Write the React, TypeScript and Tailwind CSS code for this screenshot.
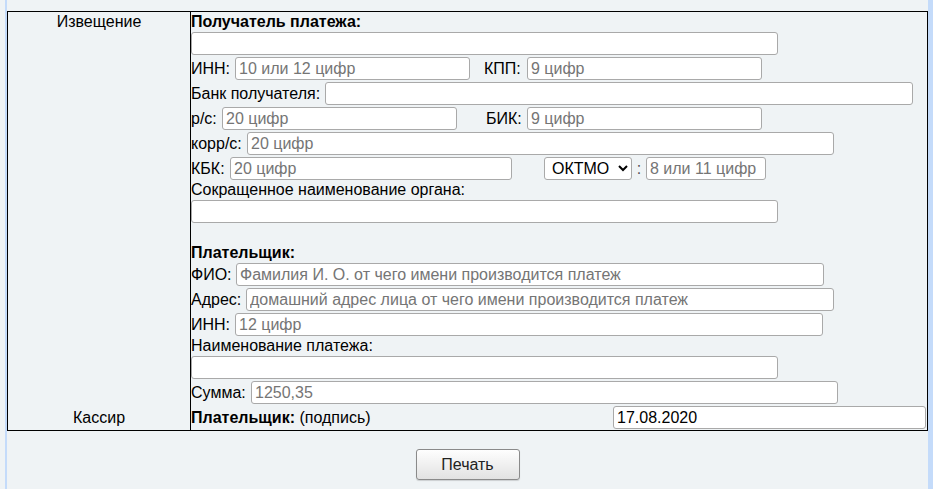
import type { ReactNode } from 'react'

const inputCls =
  'h-[23px] shrink-0 rounded-[3px] border border-[#a9a9a9] bg-white px-[3px] text-[16px] font-normal text-black outline-none placeholder:text-[#757575]'

function Row({ children }: { children: ReactNode }) {
  return <div className="flex h-[25px] items-center whitespace-nowrap">{children}</div>
}

// label width includes the trailing space before the field
function Label({ className, children }: { className: string; children: ReactNode }) {
  return <span className={`shrink-0 font-normal ${className}`}>{children}</span>
}

export default function App() {
  return (
    <div
      className="flex h-[489px] w-full bg-[#eff3f5] text-[16px] text-black"
      style={{ fontFamily: '"Liberation Sans", Arial, sans-serif' }}
    >
      <div className="w-[5px] shrink-0" />
      <div className="w-[923px] shrink-0 border-l-2 border-[#c4dbfa]">
        <div className="mt-[11px] grid grid-cols-[183px_1fr] border border-black">
          <div className="flex flex-col justify-between border-r border-black text-center">
            <div className="h-[19px] leading-[19px]">Извещение</div>
            <div className="h-[25px] leading-[25px]">Кассир</div>
          </div>
          <div className="flex flex-col">
            <div className="h-[19px] font-bold leading-[19px]">Получатель платежа:</div>
            <Row>
              <input className={`${inputCls} w-[587px]`} />
            </Row>
            <Row>
              <Label className="w-[44px]">ИНН:</Label>
              <input className={`${inputCls} w-[235px]`} placeholder="10 или 12 цифр" />
              <Label className="ml-[14px] w-[43px]">КПП:</Label>
              <input className={`${inputCls} w-[235px]`} placeholder="9 цифр" />
            </Row>
            <Row>
              <Label className="w-[134px]">Банк получателя:</Label>
              <input className={`${inputCls} w-[588px]`} />
            </Row>
            <Row>
              <Label className="w-[31px]">р/с:</Label>
              <input className={`${inputCls} w-[235px]`} placeholder="20 цифр" />
              <Label className="ml-[29px] w-[41px]">БИК:</Label>
              <input className={`${inputCls} w-[235px]`} placeholder="9 цифр" />
            </Row>
            <Row>
              <Label className="w-[56px]">корр/с:</Label>
              <input className={`${inputCls} w-[587px]`} placeholder="20 цифр" />
            </Row>
            <Row>
              <Label className="w-[39px]">КБК:</Label>
              <input className={`${inputCls} w-[282px]`} placeholder="20 цифр" />
              <select
                className="ml-[32px] h-[23px] w-[88px] shrink-0 rounded-[3px] border border-[#a9a9a9] bg-white pl-[3px] text-[16px] text-black"
                defaultValue="oktmo"
              >
                <option value="oktmo">ОКТМО</option>
                <option value="okato">ОКАТО</option>
              </select>
              <span className="w-[14px] shrink-0 text-center text-[#555]">:</span>
              <input className={`${inputCls} w-[120px]`} placeholder="8 или 11 цифр" />
            </Row>
            <div className="h-[18px] leading-[18px]">Сокращенное наименование органа:</div>
            <Row>
              <input className={`${inputCls} w-[587px]`} />
            </Row>
            <div className="h-[19px]" />
            <div className="h-[19px] font-bold leading-[19px]">Плательщик:</div>
            <Row>
              <Label className="w-[45px]">ФИО:</Label>
              <input
                className={`${inputCls} w-[588px]`}
                placeholder="Фамилия И. О. от чего имени производится платеж"
              />
            </Row>
            <Row>
              <Label className="w-[55px]">Адрес:</Label>
              <input
                className={`${inputCls} w-[588px]`}
                placeholder="домашний адрес лица от чего имени производится платеж"
              />
            </Row>
            <Row>
              <Label className="w-[44px]">ИНН:</Label>
              <input className={`${inputCls} w-[588px]`} placeholder="12 цифр" />
            </Row>
            <div className="h-[18px] leading-[18px]">Наименование платежа:</div>
            <Row>
              <input className={`${inputCls} w-[587px]`} />
            </Row>
            <Row>
              <Label className="w-[60px]">Сумма:</Label>
              <input className={`${inputCls} w-[587px]`} placeholder="1250,35" />
            </Row>
            <Row>
              <span>
                <b>Плательщик:</b> (подпись)
              </span>
              <input className={`${inputCls} ml-auto mr-[1px] w-[313px]`} defaultValue="17.08.2020" />
            </Row>
          </div>
        </div>
        <div className="mt-[18px] flex justify-center">
          <button className="h-[31px] w-[104px] rounded-[3px] border border-[#8a8a8a] bg-gradient-to-b from-[#fefefe] to-[#e2e2e2] text-[16px] text-[#222] shadow-[0_1px_1px_rgba(0,0,0,0.15)]">
            Печать
          </button>
        </div>
      </div>
      <div className="flex-1 bg-[#c4dbfa]" />
    </div>
  )
}
